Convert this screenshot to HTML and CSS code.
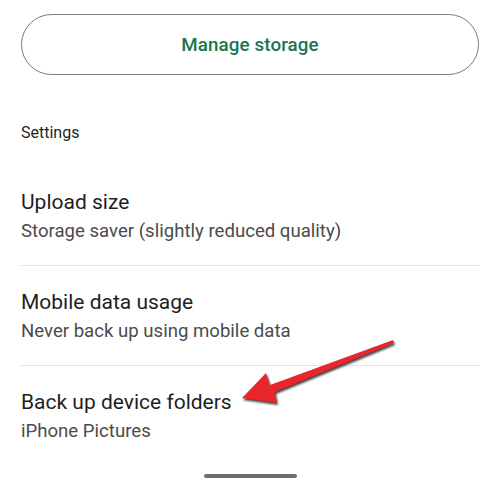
FILE: index.html
```html
<!DOCTYPE html>
<html>
<head>
<meta charset="utf-8">
<link rel="stylesheet" href="styles.css">
</head>
<body>
<div class="page">
  <div class="btn">Manage storage</div>
  <div class="section">Settings</div>
  <div class="row">
    <div class="title">Upload size</div>
    <div class="sub">Storage saver (slightly reduced quality)</div>
  </div>
  <div class="row">
    <div class="title">Mobile data usage</div>
    <div class="sub">Never back up using mobile data</div>
  </div>
  <div class="row last">
    <div class="title">Back up device folders</div>
    <div class="sub">iPhone Pictures</div>
  </div>
  <div class="home"></div>
  <svg class="arrow" width="500" height="485" viewBox="0 0 500 485">
    <polygon points="242,398 266,373 270,385 393,340 394,343 275,392 277,403" fill="#e8262b"/>
  </svg>
</div>
</body>
</html>
```
FILE: styles.css
```css
html, body {
  margin: 0;
  padding: 0;
  background: #ffffff;
}
.page {
  position: relative;
  width: 500px;
  height: 485px;
  overflow: hidden;
  padding: 14px 21px 0 21px;
  box-sizing: border-box;
  font-family: Roboto, "Liberation Sans", sans-serif;
  display: flex;
  flex-direction: column;
}
.btn {
  height: 61px;
  box-sizing: border-box;
  border: 1.5px solid #7a7a7a;
  border-radius: 31px;
  display: flex;
  align-items: center;
  justify-content: center;
  color: #1b7551;
  font-size: 18.8px;
  font-weight: 500;
  letter-spacing: 0.1px;
}
.section {
  margin-top: 48px;
  line-height: 20px;
  font-size: 16px;
  color: #1f1f1f;
}
.row {
  margin-top: 0;
  padding: 22px 0 19px 0;
  border-bottom: 1px solid #e3e3e3;
  margin-right: -1px;
}
.section + .row {
  margin-top: 23px;
}
.row.last {
  border-bottom: none;
}
.title {
  font-size: 21px;
  line-height: 28px;
  color: #1f1f1f;
}
.sub {
  font-size: 18.6px;
  line-height: 30px;
  color: #4b4b4b;
}
.home {
  align-self: center;
  margin-top: 9px;
  width: 93px;
  height: 4px;
  border-radius: 2px;
  background: #6e6e6e;
}
.arrow {
  position: absolute;
  left: 0;
  top: 0;
  filter: drop-shadow(1px 2px 1px rgba(0,0,0,0.75));
}
```
